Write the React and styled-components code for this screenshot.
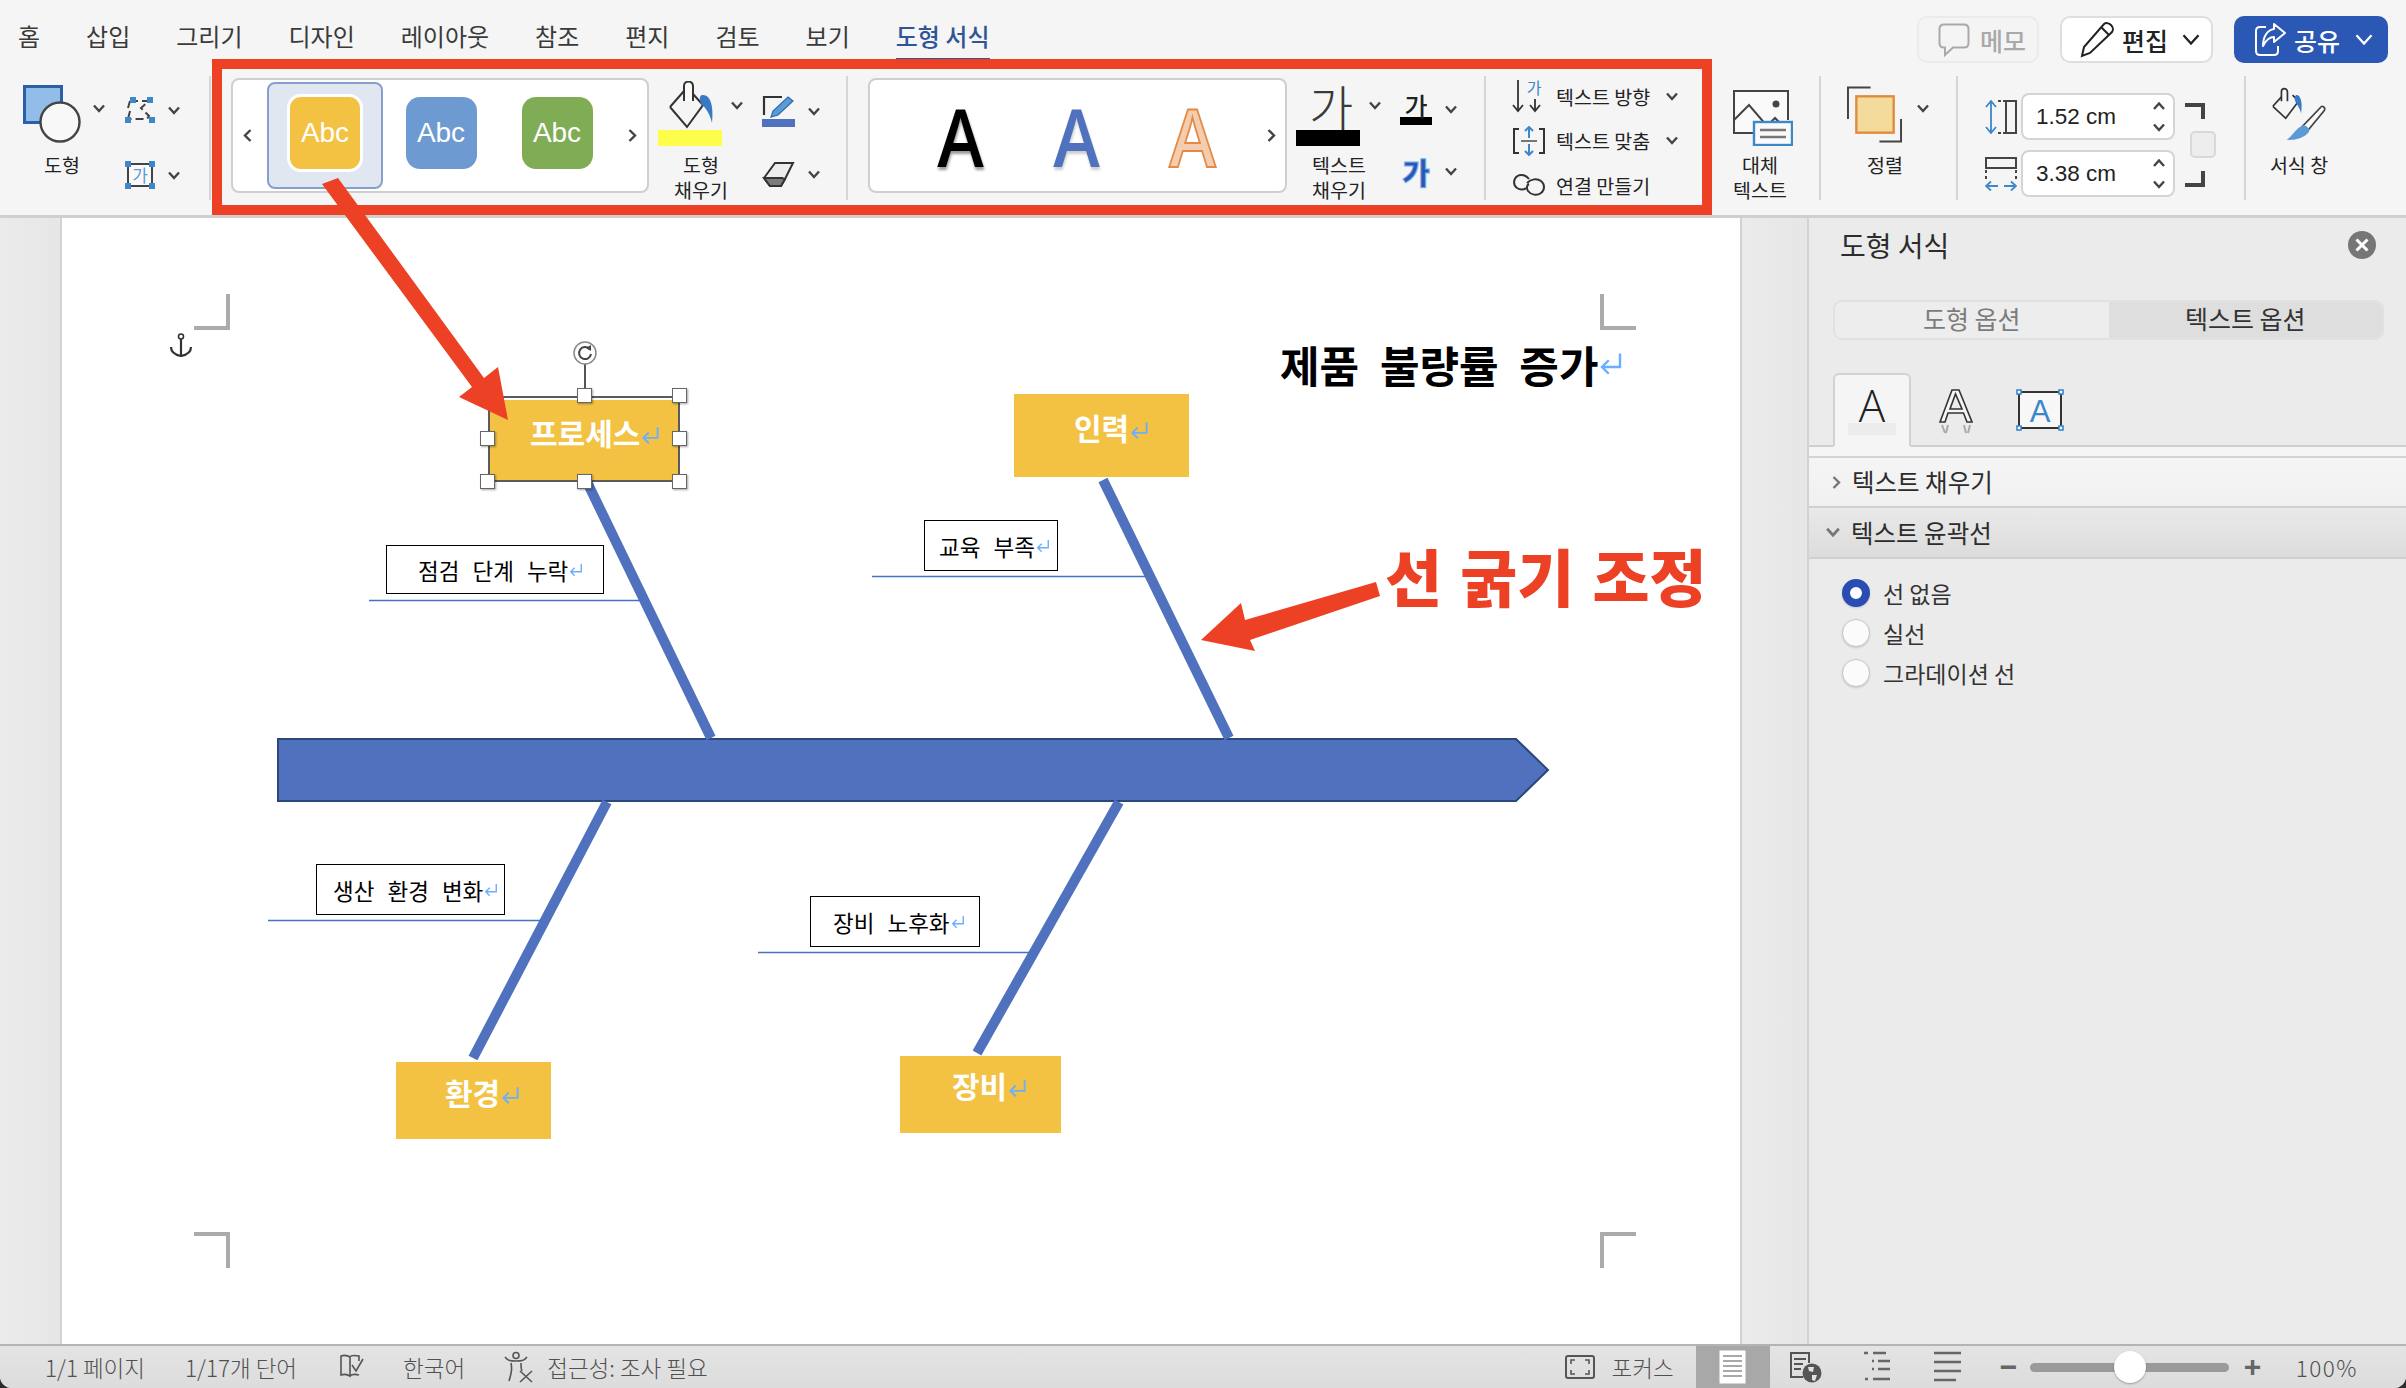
import React from 'react'
import styled, { createGlobalStyle } from 'styled-components'

const KR = `"Noto Sans CJK KR", "Noto Sans", sans-serif`
const ORANGE = '#ec4125'
const YELLOW = '#f4c242'
const BLUE = '#4f71be'
const LINE = '#4472c4'
const INK = '#3a3a3a'

const GlobalStyle = createGlobalStyle`
  html, body { margin: 0; padding: 0; background: #2d2d2d; }
  * { box-sizing: border-box; }
  #root { width: 2406px; height: 1388px; }
`

const TABS = ['홈', '삽입', '그리기', '디자인', '레이아웃', '참조', '편지', '검토', '보기']

/* small icons */
const Chev = ({ dir = 'down', size = 12, color = '#444', weight = 2.4 }) => {
  const d = {
    down: 'M1 1.5 L6 7 L11 1.5',
    up: 'M1 7 L6 1.5 L11 7',
    left: 'M7.5 1 L2 6.5 L7.5 12',
    right: 'M2.5 1 L8 6.5 L2.5 12',
  }[dir]
  const vertical = dir === 'left' || dir === 'right'
  return (
    <svg width={vertical ? 10 : size} height={vertical ? 13 : size * 0.75} viewBox={vertical ? '0 0 10 13' : '0 0 12 9'} style={{ flex: 'none' }}>
      <path d={d} fill="none" stroke={color} strokeWidth={weight} />
    </svg>
  )
}

const ReturnMark = ({ size = 16 }) => (
  <svg width={size} height={size} viewBox="0 0 16 16" style={{ flex: 'none', marginLeft: 1 }}>
    <path d="M14 1 V10 H2 M6.5 5.5 L2 10 L6.5 14.5" fill="none" stroke="#6aaeff" strokeWidth="1.6" />
  </svg>
)

const ShapesIcon = () => (
  <svg width="60" height="58" viewBox="0 0 60 58">
    <rect x="1.5" y="1.5" width="37" height="36" fill="#92bde8" stroke="#2b5fa8" strokeWidth="3" />
    <ellipse cx="37" cy="37" rx="19.5" ry="19.5" fill="#f8f8f8" stroke="#444" strokeWidth="2.4" />
  </svg>
)

const EditShapeIcon = () => (
  <svg width="30" height="26" viewBox="0 0 30 26">
    <path d="M5 4 H24 L16 11 L24 19 L22 22 H5 M5 4 L3 11 M5 14 L3 22" fill="none" stroke="#444" strokeWidth="2" strokeDasharray="8 4" />
    <g fill="#3d87cb">
      <rect x="5" y="0" width="6" height="6" />
      <rect x="22" y="0" width="6" height="6" />
      <rect x="0" y="20" width="6" height="6" />
      <rect x="24" y="20" width="6" height="6" />
    </g>
  </svg>
)

const TextBoxIcon = () => (
  <svg width="30" height="28" viewBox="0 0 30 28">
    <rect x="3" y="3" width="24" height="22" fill="#fafafa" stroke="#444" strokeWidth="2" />
    <g fill="#3d87cb">
      <rect x="0" y="0" width="6" height="6" />
      <rect x="24" y="0" width="6" height="6" />
      <rect x="0" y="22" width="6" height="6" />
      <rect x="24" y="22" width="6" height="6" />
    </g>
    <text x="15" y="21" textAnchor="middle" fontSize="17" fill="#5b9bd5" fontFamily={KR}>가</text>
  </svg>
)

const BucketIcon = () => (
  <svg width="46" height="48" viewBox="0 0 46 48" style={{ flex: 'none' }}>
    <path d="M2 26 L16 10 M2 26 L19 46 L35 24 L25 13" fill="none" stroke="#333" strokeWidth="2" />
    <path d="M16 20 V5 a4.5 4.5 0 0 1 9 0 V20" fill="#fafafa" stroke="#333" strokeWidth="2" />
    <path d="M34 14 C42 13 46 24 44 42 C42 33 38 27 34 24 C31 20 31 15 34 14 Z" fill="#3a79c4" />
  </svg>
)

const PenIcon = () => (
  <svg width="33" height="32" viewBox="0 0 33 32">
    <path d="M20 2 H2 V20" fill="none" stroke="#333" strokeWidth="2.2" />
    <path d="M26 2 L31 6 L16 20 L9 22 L11 16 Z" fill="#5b9bd5" stroke="#2b6cb0" strokeWidth="1.2" />
    <rect x="0" y="24" width="33" height="8" fill={BLUE} />
  </svg>
)

const EraserIcon = () => (
  <svg width="33" height="27" viewBox="0 0 33 27">
    <path d="M2 17 L13 2 H31 L23 18 L19 25 H8 Z" fill="#ededed" stroke="#333" strokeWidth="2" />
    <path d="M2 17 H20 L23 18 L19 25 H8 Z" fill="#7c7c7c" stroke="#333" strokeWidth="2" />
  </svg>
)

const DirectionIcon = () => (
  <svg width="34" height="34" viewBox="0 0 34 34">
    <path d="M6 1 V32 M1 26 L6 32 L11 26 M23 20 V32 M18 26 L23 32 L28 26" fill="none" stroke="#333" strokeWidth="1.8" />
    <text x="22" y="15" textAnchor="middle" fontSize="16" fill="#3d87cb" fontFamily={KR}>가</text>
  </svg>
)

const FitIcon = () => (
  <svg width="34" height="30" viewBox="0 0 34 30">
    <path d="M7 3 H2 V27 H7 M27 3 H32 V27 H27" fill="none" stroke="#333" strokeWidth="2" />
    <path d="M9 15 H25" stroke="#777" strokeWidth="2" />
    <path d="M17 1 V12 M13 5 L17 1 L21 5 M17 18 V29 M13 25 L17 29 L21 25" fill="none" stroke="#3d87cb" strokeWidth="2" />
  </svg>
)

const LinkIcon = () => (
  <svg width="34" height="26" viewBox="0 0 34 26">
    <path d="M17 7 C14 3 9 2 5.5 4 C1 7 1 13 5 16 C8 18 12 18 14 16" fill="none" stroke="#333" strokeWidth="2" />
    <path d="M15 11 C19 7 25 6 29 9 C33 12 33 18 29 21 C25 24 19 23 16 19 C14 16 15 13 17 12" fill="none" stroke="#333" strokeWidth="2" />
  </svg>
)

const AltTextIcon = () => (
  <svg width="60" height="56" viewBox="0 0 60 56">
    <path d="M20 43 H1 V1 H55 V30" fill="#fafafa" stroke="#444" strokeWidth="2" />
    <path d="M1 30 L16 15 L34 36 L42 28 L50 36" fill="none" stroke="#444" strokeWidth="2" />
    <circle cx="43" cy="14" r="3.5" fill="#444" />
    <rect x="21" y="32" width="38" height="23" fill="#fafafa" stroke="#3d87cb" strokeWidth="2.4" />
    <path d="M27 40 H53 M27 47 H53" stroke="#777" strokeWidth="2.4" />
  </svg>
)

const ArrangeIcon = () => (
  <svg width="57" height="57" viewBox="0 0 57 57">
    <path d="M1 33 V1 H24" fill="none" stroke="#444" strokeWidth="2" />
    <path d="M55 33 V56 H33" fill="none" stroke="#444" strokeWidth="2" />
    <rect x="9.5" y="10" width="38" height="37" fill="#f3dc9b" stroke="#e08b3c" strokeWidth="2.4" />
  </svg>
)

const HeightIcon = () => (
  <svg width="32" height="34" viewBox="0 0 32 34">
    <path d="M6 1 V33 M1 7 L6 1 L11 7 M1 27 L6 33 L11 27" fill="none" stroke="#3d87cb" strokeWidth="1.8" />
    <rect x="21" y="1" width="10" height="32" fill="none" stroke="#444" strokeWidth="2" />
    <path d="M13 1 H20 M13 33 H20" stroke="#444" strokeWidth="2" strokeDasharray="3 2" />
  </svg>
)

const WidthIcon = () => (
  <svg width="32" height="34" viewBox="0 0 32 34">
    <rect x="1" y="1" width="30" height="10" fill="none" stroke="#444" strokeWidth="2" />
    <path d="M1 13 V23 M31 13 V23" stroke="#444" strokeWidth="2" strokeDasharray="3 3" />
    <path d="M1 29 H13 M19 29 H31 M6 24.5 L1 29 L6 33.5 M26 24.5 L31 29 L26 33.5" fill="none" stroke="#3d87cb" strokeWidth="1.8" />
  </svg>
)

const PaneIcon = () => (
  <svg width="63" height="62" viewBox="0 0 63 62">
    <path d="M1 22 L11 11 M1 22 L16 36 L31 16 L24 9" fill="none" stroke="#333" strokeWidth="2" />
    <path d="M11 16 V5 a3.5 3.5 0 0 1 7 0 V16" fill="#fafafa" stroke="#333" strokeWidth="2" />
    <path d="M28 9 C33 8 36 17 34 30 C32 24 30 21 28 18 C26 14 26 10 28 9 Z" fill="#3a79c4" />
    <path d="M56 24 C58 20 63 23 61 27 L42 50 L36 45 Z" fill="#fafafa" stroke="#444" strokeWidth="2" />
    <path d="M36 44 C40 44 45 48 43 52 C38 59 26 62 17 61 C24 57 27 48 36 44 Z" fill="#5b9bd5" />
  </svg>
)

const CommentIcon = () => (
  <svg width="32" height="34" viewBox="0 0 32 34">
    <path d="M6 1.5 H26 C29 1.5 30.5 3 30.5 6 V20 C30.5 23 29 24.5 26 24.5 H15 L7 32 V24.5 H6 C3 24.5 1.5 23 1.5 20 V6 C1.5 3 3 1.5 6 1.5 Z" fill="none" stroke="#a9a9a9" strokeWidth="2" />
  </svg>
)

const PencilIcon = () => (
  <svg width="34" height="36" viewBox="0 0 34 36">
    <path d="M24 2 C26 0.5 29 1 31 3 C33 5 33.5 8 32 10 L10 31 L2 34 L4 25 Z M21 5 L29 13" fill="#fff" stroke="#222" strokeWidth="2" />
  </svg>
)

const ShareIcon = () => (
  <svg width="32" height="36" viewBox="0 0 32 36">
    <path d="M12 5 H6 C3 5 2 6 2 9 V29 C2 32 3 33 6 33 H20 C23 33 24 32 24 29 V24" fill="none" stroke="#fff" strokeWidth="2" />
    <path d="M20 2 L31 11 L20 20 V15 C15 15 12 18 9 24 C9 15 13 8 20 7 Z" fill="none" stroke="#fff" strokeWidth="2" strokeLinejoin="round" />
  </svg>
)

const CloseIcon = () => (
  <svg width="28" height="28" viewBox="0 0 28 28">
    <circle cx="14" cy="14" r="14" fill="#767676" />
    <path d="M8.5 8.5 L19.5 19.5 M19.5 8.5 L8.5 19.5" stroke="#fff" strokeWidth="3" />
  </svg>
)

const OutlineAIcon = () => (
  <svg width="34" height="46" viewBox="0 0 34 46">
    <path d="M1 33 L13 1 H20 L33 33 H28 L24.5 24 H9 L6 33 Z M11 20 H23 L16.5 5 Z" fill="#f5f5f5" stroke="#333" strokeWidth="1.6" />
    <path d="M3 36 L6 44 M9 36 L7 44 M25 36 L27 44 M31 36 L29 44" stroke="#aaa" strokeWidth="2" />
  </svg>
)

const BoxAIcon = () => (
  <svg width="48" height="42" viewBox="0 0 48 42">
    <rect x="3" y="3" width="42" height="36" fill="#f7f7f7" stroke="#333" strokeWidth="2" />
    <text x="24" y="33" textAnchor="middle" fontSize="31" fill="#3d87cb" fontFamily="Liberation Sans">A</text>
    <g fill="#fff" stroke="#3d87cb" strokeWidth="1.6">
      <rect x="1" y="1" width="4" height="4" />
      <rect x="43" y="1" width="4" height="4" />
      <rect x="1" y="37" width="4" height="4" />
      <rect x="43" y="37" width="4" height="4" />
    </g>
  </svg>
)

const BookIcon = () => (
  <svg width="24" height="28" viewBox="0 0 24 28">
    <path d="M10 4 C7 2 4 2 1 3 V22 C4 21 7 21 10 23 V4 M10 4 C11 2 14 2 19 3 V8 M10 23 C12 21 15 21 19 22" fill="none" stroke="#555" strokeWidth="1.6" />
    <path d="M12 12 L16 18 L23 6" fill="none" stroke="#555" strokeWidth="1.6" />
  </svg>
)

const PersonIcon = () => (
  <svg width="32" height="32" viewBox="0 0 32 32">
    <circle cx="13" cy="4.5" r="3" fill="none" stroke="#555" strokeWidth="1.6" />
    <path d="M2 6 C5 10 8 10 13 10 C18 10 21 10 24 6 M8 12 C9 17 9 20 6 30 M18 12 C18 16 18 18 19 20" fill="none" stroke="#555" strokeWidth="1.6" />
    <path d="M17 20 L29 31 M29 20 L17 31" stroke="#555" strokeWidth="1.6" />
  </svg>
)

const FocusIcon = () => (
  <svg width="30" height="24" viewBox="0 0 30 24">
    <rect x="1" y="1" width="28" height="22" rx="2" fill="none" stroke="#555" strokeWidth="2" />
    <path d="M6 9 V5 H10 M20 5 H24 V9 M24 15 V19 H20 M10 19 H6 V15" fill="none" stroke="#555" strokeWidth="1.6" />
  </svg>
)

const PrintViewIcon = () => (
  <svg width="27" height="34" viewBox="0 0 27 34">
    <rect x="1" y="1" width="25" height="32" fill="#fff" stroke="#fff" />
    <path d="M4 6 H23 M4 11 H23 M4 16 H23 M4 21 H23 M4 26 H23" stroke="#a8a8a8" strokeWidth="2" />
  </svg>
)

const WebViewIcon = () => (
  <svg width="33" height="32" viewBox="0 0 33 32">
    <path d="M14 26 H2 V2 H20 V12" fill="none" stroke="#555" strokeWidth="2" />
    <path d="M5 8 H17 M5 13 H14 M5 18 H12" stroke="#555" strokeWidth="2" />
    <circle cx="23" cy="22" r="9.5" fill="#555" />
    <path d="M19 16 L25 16 L24 21 L20 20 Z M23 24 L28 24 L26 30 L23 29 Z" fill="#e2e2e2" />
  </svg>
)

const OutlineViewIcon = () => (
  <svg width="30" height="32" viewBox="0 0 30 32">
    <path d="M2 2 H6 M11 2 H24 M10 10 H12 M16 10 H28 M10 18 H12 M16 18 H28 M3 28 H6 M11 28 H28" stroke="#666" strokeWidth="2.4" />
  </svg>
)

const DraftViewIcon = () => (
  <svg width="29" height="32" viewBox="0 0 29 32">
    <path d="M1 2 H28 M1 11 H28 M1 20 H28 M1 29 H23" stroke="#666" strokeWidth="2.6" />
  </svg>
)

const RedOverlayIcon = () => (
  <svg width="2406" height="1388" viewBox="0 0 2406 1388">
    <rect x="217" y="64" width="1490" height="146" fill="none" stroke={ORANGE} strokeWidth="10" />
    <path d="M322 184 L338 178 L484 378 L498 367 L508 420 L459 397 L472 387 Z" fill={ORANGE} />
    <path d="M1376 582 L1380 596 L1250 640 L1255 651 L1201 640 L1241 603 L1245 620 Z" fill={ORANGE} />
  </svg>
)

const BonesDrawing = () => (
  <svg width="1679" height="1126" viewBox="62 218 1679 1126">
    <path d="M278 739 H1516 L1548 770 L1516 801 H278 Z" fill={BLUE} stroke="#2c4779" strokeWidth="2" />
    <g stroke={BLUE} strokeWidth="10" fill="none">
      <path d="M587 482 L711 738" />
      <path d="M1103 480 L1229 738" />
      <path d="M607 802 L473 1058" />
      <path d="M1119 802 L977 1053" />
    </g>
    <g stroke={LINE} strokeWidth="1.5">
      <path d="M369 600.5 H642" />
      <path d="M872 576.5 H1146" />
      <path d="M268 920.5 H541" />
      <path d="M758 952.5 H1032" />
    </g>
  </svg>
)

const AnchorIcon = () => (
  <svg width="24" height="24" viewBox="0 0 24 24">
    <circle cx="12" cy="3.5" r="2.5" fill="none" stroke="#333" strokeWidth="1.6" />
    <path d="M12 6 V23 M2 14 C2 20 7 22 12 23 C17 22 22 20 22 14" fill="none" stroke="#333" strokeWidth="2.2" />
  </svg>
)

const RotateIcon = () => (
  <svg width="24" height="24" viewBox="0 0 24 24">
    <circle cx="12" cy="12" r="11" fill="#fff" stroke="#888" strokeWidth="1.5" />
    <path d="M16.5 8 A6 6 0 1 0 18 13" fill="none" stroke="#444" strokeWidth="2" />
    <path d="M13 7 L18 4 L18 10 Z" fill="#444" />
  </svg>
)

const HANDLES = [
  [488, 396], [585, 396], [680, 396],
  [488, 439], [680, 439],
  [488, 482], [585, 482], [680, 482],
]

const BOXES = [
  { text: '프로세스', x: 488, y: 396, w: 192, h: 86, tx: 40, ty: 13 },
  { text: '인력', x: 1014, y: 394, w: 175, h: 83, tx: 60, ty: 12 },
  { text: '환경', x: 396, y: 1062, w: 155, h: 77, tx: 49, ty: 9 },
  { text: '장비', x: 900, y: 1056, w: 161, h: 77, tx: 52, ty: 8 },
]

const LABELS = [
  { text: '점검 단계 누락', x: 386, y: 545, w: 218, h: 49, tx: 31 },
  { text: '교육 부족', x: 924, y: 520, w: 134, h: 51, tx: 14 },
  { text: '생산 환경 변화', x: 316, y: 864, w: 189, h: 51, tx: 16 },
  { text: '장비 노후화', x: 810, y: 896, w: 170, h: 51, tx: 22 },
]

export default function App() {
  return (
    <Window>
      <GlobalStyle />
      <TabBar>
        {TABS.map(tab => (
          <Tab key={tab}>{tab}</Tab>
        ))}
        <Tab $active>도형 서식</Tab>
        <TopActions>
          <MemoButton>
            <CommentIcon />
            메모
          </MemoButton>
          <EditButton>
            <PencilIcon />
            편집
            <Chev color="#222" size={18} weight={1.5} />
          </EditButton>
          <ShareButton>
            <ShareIcon />
            공유
            <Chev color="#fff" size={18} weight={1.5} />
          </ShareButton>
        </TopActions>
      </TabBar>

      <Ribbon>
        <Group $w={211} $pl={23}>
          <ToolColumn $w={82}>
            <IconZone>
              <ShapesIcon />
              <ChevSlot $x={10} $y={-12}>
                <Chev />
              </ChevSlot>
            </IconZone>
            <ToolLabel $w={78}>도형</ToolLabel>
          </ToolColumn>
          <SmallStack $ml={20} $top={21} $gap={38}>
            <SmallRow>
              <EditShapeIcon />
              <Chev />
            </SmallRow>
            <SmallRow>
              <TextBoxIcon />
              <Chev />
            </SmallRow>
          </SmallStack>
        </Group>

        <Group $w={637} $pl={20}>
          <Gallery $w={418}>
            <Chev dir="left" />
            <StyleCells $ml={14} $mr={12}>
              <StyleCell $active>
                <Swatch $color={YELLOW} $ring>Abc</Swatch>
              </StyleCell>
              <StyleCell>
                <Swatch $color="#6d9bd1">Abc</Swatch>
              </StyleCell>
              <StyleCell>
                <Swatch $color="#81ac56">Abc</Swatch>
              </StyleCell>
            </StyleCells>
            <Chev dir="right" />
          </Gallery>
          <ColorTool>
            <ColorIconRow>
              <BucketIcon />
              <Chev />
            </ColorIconRow>
            <ColorBar $color="#fdfd4c" />
            <ToolLabel>
              도형
              <br />
              채우기
            </ToolLabel>
          </ColorTool>
          <SmallStack $ml={18} $top={19} $gap={34}>
            <SmallRow>
              <PenIcon />
              <Chev />
            </SmallRow>
            <SmallRow>
              <EraserIcon />
              <Chev />
            </SmallRow>
          </SmallStack>
        </Group>

        <Group $w={638} $pl={20}>
          <Gallery $w={419}>
            <StyleCells $ml={22} $mr={16}>
              <WordCell>
                <WordA $color="#000" $shadow="rgba(0,0,0,.4)">A</WordA>
              </WordCell>
              <WordCell>
                <WordA $color={BLUE} $shadow="rgba(0,0,0,.2)">A</WordA>
              </WordCell>
              <WordCell>
                <WordA $color="#f4cdb0" $stroke="#e58a45">A</WordA>
              </WordCell>
            </StyleCells>
            <Chev dir="right" />
          </Gallery>
          <ColorTool>
            <ColorIconRow>
              <BigGa>가</BigGa>
              <Chev />
            </ColorIconRow>
            <ColorBar $color="#000" />
            <ToolLabel>
              텍스트
              <br />
              채우기
            </ToolLabel>
          </ColorTool>
          <SmallStack $ml={18} $top={17} $gap={30}>
            <SmallRow>
              <UnderGa>가</UnderGa>
              <Chev />
            </SmallRow>
            <SmallRow>
              <GlowGa>가</GlowGa>
              <Chev />
            </SmallRow>
          </SmallStack>
        </Group>

        <Group $w={335} $pl={26}>
          <TextTools>
            <TextToolRow>
              <DirectionIcon />
              <TextToolLabel>텍스트 방향</TextToolLabel>
              <Chev />
            </TextToolRow>
            <TextToolRow>
              <FitIcon />
              <TextToolLabel>텍스트 맞춤</TextToolLabel>
              <Chev />
            </TextToolRow>
            <TextToolRow>
              <LinkIcon />
              <TextToolLabel>연결 만들기</TextToolLabel>
            </TextToolRow>
          </TextTools>
          <ToolColumn $w={70} $ml={47}>
            <IconZone $center>
              <AltTextIcon />
            </IconZone>
            <ToolLabel>
              대체
              <br />
              텍스트
            </ToolLabel>
          </ToolColumn>
        </Group>

        <Group $w={137} $pl={26}>
          <ToolColumn $w={82}>
            <IconZone>
              <ArrangeIcon />
              <ChevSlot $x={14} $y={-12}>
                <Chev />
              </ChevSlot>
            </IconZone>
            <ToolLabel $w={76}>정렬</ToolLabel>
          </ToolColumn>
        </Group>

        <Group $w={288} $pl={27}>
          <SizeStack>
            <SizeRow>
              <HeightIcon />
              <SizeInput>
                1.52 cm
                <Stepper>
                  <Chev dir="up" />
                  <Chev />
                </Stepper>
              </SizeInput>
            </SizeRow>
            <SizeRow>
              <WidthIcon />
              <SizeInput>
                3.38 cm
                <Stepper>
                  <Chev dir="up" />
                  <Chev />
                </Stepper>
              </SizeInput>
            </SizeRow>
          </SizeStack>
          <LockColumn>
            <LockCorner />
            <LockBox />
            <LockCorner $bottom />
          </LockColumn>
        </Group>

        <Group $w={160} $pl={26} $last>
          <ToolColumn $w={54}>
            <IconZone>
              <PaneIcon />
            </IconZone>
            <ToolLabel $nowrap>서식 창</ToolLabel>
          </ToolColumn>
        </Group>
      </Ribbon>

      <Main>
        <DocArea>
          <Gutter $w={62} />
          <Page>
            <BonesDrawing />
            <CropMark $x={194} $y={294} $right $bottom />
            <CropMark $x={1600} $y={294} $left $bottom />
            <CropMark $x={194} $y={1232} $right $top />
            <CropMark $x={1600} $y={1232} $left $top />
            <Placed $x={169} $y={333}>
              <AnchorIcon />
            </Placed>

            {BOXES.map(b => (
              <CauseBox key={b.text} $x={b.x} $y={b.y} $w={b.w} $h={b.h} $tx={b.tx} $ty={b.ty} $selected={b.text === '프로세스'}>
                {b.text}
                <ReturnMark size={19} />
              </CauseBox>
            ))}
            <RotateStem />
            <Placed $x={573} $y={341}>
              <RotateIcon />
            </Placed>
            {HANDLES.map(([x, y]) => (
              <Handle key={`${x}-${y}`} $x={x} $y={y} />
            ))}

            {LABELS.map(l => (
              <SubLabel key={l.text} $x={l.x} $y={l.y} $w={l.w} $h={l.h} $tx={l.tx}>
                {l.text}
                <ReturnMark size={14} />
              </SubLabel>
            ))}

            <DiagramTitle>
              제품 불량률 증가
              <ReturnMark size={24} />
            </DiagramTitle>
            <Callout>선 굵기 조정</Callout>
          </Page>
          <Gutter $w={65} />
        </DocArea>

        <Panel>
          <PanelHead>
            <PanelTitle>도형 서식</PanelTitle>
            <CloseIcon />
          </PanelHead>
          <Segmented>
            <Segment>도형 옵션</Segment>
            <Segment $active>텍스트 옵션</Segment>
          </Segmented>
          <IconTabs>
            <IconTab $active>
              <PlainA>A</PlainA>
              <PlainABar />
            </IconTab>
            <IconTab>
              <OutlineAIcon />
            </IconTab>
            <IconTab>
              <BoxAIcon />
            </IconTab>
          </IconTabs>
          <PanelSpacer />
          <Section>
            <Chev dir="right" color="#777" />
            <SectionTitle>텍스트 채우기</SectionTitle>
          </Section>
          <Section $open>
            <Chev color="#777" size={14} />
            <SectionTitle>텍스트 윤곽선</SectionTitle>
          </Section>
          <RadioList>
            <RadioRow>
              <Radio $checked />
              선 없음
            </RadioRow>
            <RadioRow>
              <Radio />
              실선
            </RadioRow>
            <RadioRow>
              <Radio />
              그라데이션 선
            </RadioRow>
          </RadioList>
        </Panel>
      </Main>

      <StatusBar>
        <StatusText $ml={45}>1/1 페이지</StatusText>
        <StatusText $ml={40}>1/17개 단어</StatusText>
        <StatusIcon $ml={43}>
          <BookIcon />
        </StatusIcon>
        <StatusText $ml={39}>한국어</StatusText>
        <StatusIcon $ml={38}>
          <PersonIcon />
        </StatusIcon>
        <StatusText $ml={12}>접근성: 조사 필요</StatusText>
        <StatusRight>
          <FocusIcon />
          <StatusText $ml={17}>포커스</StatusText>
          <ViewButton $active>
            <PrintViewIcon />
          </ViewButton>
          <StatusIcon $ml={19}>
            <WebViewIcon />
          </StatusIcon>
          <StatusIcon $ml={40}>
            <OutlineViewIcon />
          </StatusIcon>
          <StatusIcon $ml={41}>
            <DraftViewIcon />
          </StatusIcon>
          <ZoomSign $ml={38}>−</ZoomSign>
          <ZoomTrack>
            <ZoomThumb />
          </ZoomTrack>
          <ZoomSign $ml={15}>+</ZoomSign>
          <StatusText $ml={36} $wide>100%</StatusText>
        </StatusRight>
      </StatusBar>

      <RedOverlay>
        <RedOverlayIcon />
      </RedOverlay>
    </Window>
  )
}

const Window = styled.div`
  position: relative;
  width: 2406px;
  height: 1388px;
  overflow: hidden;
  background: #f5f5f5;
  border-radius: 0 0 12px 12px;
  font-family: ${KR};
  color: ${INK};
`

const RedOverlay = styled.div`
  position: absolute;
  inset: 0;
  pointer-events: none;
  z-index: 5;
`

const TabBar = styled.div`
  position: relative;
  z-index: 1;
  display: flex;
  align-items: flex-end;
  gap: 46px;
  height: 60px;
  padding: 0 18px;
`

const Tab = styled.div`
  height: 42px;
  line-height: 36px;
  font-size: 24px;
  white-space: nowrap;
  color: ${p => (p.$active ? '#2f5597' : INK)};
  font-weight: ${p => (p.$active ? 500 : 400)};
  border-bottom: 2px solid ${p => (p.$active ? '#2f5597' : 'transparent')};
`

const TopActions = styled.div`
  display: flex;
  gap: 21px;
  margin-left: auto;
  margin-bottom: -3px;
`

const TopButton = styled.div`
  display: flex;
  align-items: center;
  height: 47px;
  border-radius: 10px;
  font-size: 25px;
  font-weight: 500;
  white-space: nowrap;
`

const MemoButton = styled(TopButton)`
  width: 122px;
  padding-left: 19px;
  gap: 10px;
  color: #a9a9a9;
  background: #f4f4f4;
  border: 2px solid #ebebeb;
`

const EditButton = styled(TopButton)`
  width: 153px;
  padding-left: 18px;
  gap: 8px;
  color: #222;
  background: #fff;
  border: 2px solid #dedede;
  & > svg:last-child {
    margin-left: 6px;
  }
`

const ShareButton = styled(TopButton)`
  width: 154px;
  padding-left: 20px;
  gap: 8px;
  color: #fff;
  background: #2b57b5;
  & > svg:last-child {
    margin-left: 7px;
  }
`

const Ribbon = styled.div`
  display: flex;
  height: 158px;
  padding: 16px 0 16px;
  border-bottom: 3px solid #cfcfcf;
`

const Group = styled.div`
  display: flex;
  align-items: flex-start;
  flex: 0 0 ${p => p.$w}px;
  height: 124px;
  padding-left: ${p => p.$pl}px;
  border-right: ${p => (p.$last ? 'none' : '2px solid #d6d6d6')};
`

const ToolColumn = styled.div`
  display: flex;
  flex-direction: column;
  flex: none;
  width: ${p => p.$w || 70}px;
  margin-left: ${p => p.$ml || 0}px;
`

const IconZone = styled.div`
  display: flex;
  align-items: center;
  justify-content: ${p => (p.$center ? 'center' : 'flex-start')};
  height: 76px;
  padding: ${p => (p.$center ? '8px 0 0 6px' : '0')};
`

const ChevSlot = styled.span`
  display: flex;
  margin-left: ${p => p.$x}px;
  margin-top: ${p => p.$y}px;
`

const ToolLabel = styled.div`
  display: flex;
  justify-content: center;
  width: ${p => (p.$w ? `${p.$w}px` : '100%')};
  font-size: 19.5px;
  line-height: 25px;
  text-align: center;
  white-space: ${p => (p.$nowrap ? 'nowrap' : 'normal')};
  color: #222;
`

const SmallStack = styled.div`
  display: flex;
  flex-direction: column;
  gap: ${p => p.$gap}px;
  margin-left: ${p => p.$ml}px;
  padding-top: ${p => p.$top}px;
`

const SmallRow = styled.div`
  display: flex;
  align-items: center;
  gap: 13px;
`

const Gallery = styled.div`
  display: flex;
  align-items: center;
  flex: none;
  width: ${p => p.$w}px;
  height: 115px;
  margin-top: 2px;
  padding-left: 10px;
  background: #fff;
  border: 2px solid #cfcfcf;
  border-radius: 8px;
`

const StyleCells = styled.div`
  display: flex;
  margin-left: ${p => p.$ml}px;
  margin-right: ${p => p.$mr}px;
`

const StyleCell = styled.div`
  display: flex;
  align-items: center;
  justify-content: center;
  width: 116px;
  height: 107px;
  border-radius: 8px;
  background: ${p => (p.$active ? '#e1e7f1' : 'transparent')};
  border: 2px solid ${p => (p.$active ? '#86a0cc' : 'transparent')};
`

const Swatch = styled.div`
  display: flex;
  align-items: center;
  justify-content: center;
  width: ${p => (p.$ring ? 76 : 71)}px;
  height: ${p => (p.$ring ? 78 : 72)}px;
  margin-top: -5px;
  border-radius: 14px;
  border: ${p => (p.$ring ? '3px solid #fff' : 'none')};
  background: ${p => p.$color};
  color: #fff;
  font-family: 'Liberation Sans', sans-serif;
  font-size: 28px;
`

const WordCell = styled.div`
  display: flex;
  justify-content: center;
  width: 116px;
`

const WordA = styled.div`
  font-family: 'Open Sans', sans-serif;
  font-size: 80px;
  font-weight: 600;
  line-height: 107px;
  transform: scaleX(0.88);
  color: ${p => p.$color};
  -webkit-text-stroke: ${p => (p.$stroke ? `2px ${p.$stroke}` : '0')};
  text-shadow: ${p => (p.$shadow ? `1px 3px 3px ${p.$shadow}` : 'none')};
`

const ColorTool = styled.div`
  display: flex;
  flex-direction: column;
  flex: none;
  width: 86px;
  margin-left: 9px;
`

const ColorIconRow = styled.div`
  display: flex;
  align-items: center;
  gap: 17px;
  height: 54px;
  padding-left: 10px;
  padding-top: 4px;
`

const ColorBar = styled.div`
  width: 64px;
  height: 16px;
  margin-bottom: 6px;
  background: ${p => p.$color};
`

const BigGa = styled.span`
  flex: none;
  width: 46px;
  font-size: 48px;
  font-weight: 300;
  line-height: 50px;
  margin-left: 3px;
  margin-right: -3px;
`

const UnderGa = styled.span`
  width: 32px;
  height: 32px;
  font-size: 25px;
  font-weight: 500;
  line-height: 24px;
  text-align: center;
  border-bottom: 8px solid #000;
  color: #222;
`

const GlowGa = styled.span`
  width: 32px;
  font-size: 30px;
  font-weight: 900;
  line-height: 32px;
  text-align: center;
  color: #2b57b5;
  -webkit-text-stroke: 1px #7db2e8;
`

const TextTools = styled.div`
  display: flex;
  flex-direction: column;
  flex: none;
  width: 166px;
  margin-top: -2px;
`

const TextToolRow = styled.div`
  display: flex;
  align-items: center;
  height: 44.5px;
`

const TextToolLabel = styled.span`
  flex: 1;
  margin-left: 10px;
  font-size: 19.5px;
  white-space: nowrap;
  color: #222;
`

const SizeStack = styled.div`
  display: flex;
  flex-direction: column;
  gap: 10px;
  padding-top: 17px;
`

const SizeRow = styled.div`
  display: flex;
  align-items: center;
  gap: 4px;
`

const SizeInput = styled.div`
  display: flex;
  align-items: center;
  justify-content: space-between;
  width: 154px;
  height: 47px;
  padding: 0 8px 0 13px;
  background: #fff;
  border: 2px solid #d4d4d4;
  border-radius: 8px;
  font-family: 'Liberation Sans', sans-serif;
  font-size: 22.5px;
  color: #222;
`

const Stepper = styled.div`
  display: flex;
  flex-direction: column;
  gap: 12px;
`

const LockColumn = styled.div`
  display: flex;
  flex-direction: column;
  align-items: flex-start;
  margin-left: 10px;
  padding-top: 27px;
`

const LockCorner = styled.div`
  width: 20px;
  height: 16px;
  border-right: 4px solid #444;
  border-top: ${p => (p.$bottom ? 'none' : '4px solid #444')};
  border-bottom: ${p => (p.$bottom ? '4px solid #444' : 'none')};
`

const LockBox = styled.div`
  width: 26px;
  height: 27px;
  margin: 12px 0 13px 5px;
  background: #ededed;
  border: 2px solid #d8d8d8;
  border-radius: 5px;
`

const Main = styled.div`
  display: flex;
  height: 1126px;
`

const DocArea = styled.div`
  display: flex;
  flex: 0 0 1807px;
`

const Gutter = styled.div`
  flex: 0 0 ${p => p.$w}px;
  background: linear-gradient(to right, #ebebeb, #e6e6e6);
`

const Page = styled.div`
  position: relative;
  flex: 0 0 1682px;
  height: 1126px;
  overflow: hidden;
  margin-left: -2px;
  background: #fff;
  border-left: 2px solid #d2d2d2;
  border-right: 2px solid #d2d2d2;
  & > svg:first-child {
    position: absolute;
    left: 0;
    top: 0;
  }
`

/* page children are placed by their screenshot coordinates: the diagram is a free canvas */
const Placed = styled.div`
  position: absolute;
  display: flex;
  left: ${p => p.$x - 62}px;
  top: ${p => p.$y - 218}px;
`

const CropMark = styled(Placed)`
  width: 36px;
  height: 36px;
  ${p => (p.$right ? 'border-right: 4px solid #ababab;' : '')}
  ${p => (p.$left ? 'border-left: 4px solid #ababab;' : '')}
  ${p => (p.$bottom ? 'border-bottom: 4px solid #ababab;' : '')}
  ${p => (p.$top ? 'border-top: 4px solid #ababab;' : '')}
`

const CauseBox = styled(Placed)`
  align-items: flex-start;
  width: ${p => p.$w}px;
  height: ${p => p.$h}px;
  padding: ${p => p.$ty}px 0 0 ${p => p.$tx}px;
  background: ${YELLOW};
  border: ${p => (p.$selected ? '2px solid #5b5b5b' : 'none')};
  box-shadow: ${p => (p.$selected ? 'inset 0 2px 0 #fff' : 'none')};
  color: #fff;
  font-size: 30px;
  font-weight: 700;
  line-height: 42px;
  white-space: nowrap;
  & > svg {
    margin-top: 15px;
  }
`

const RotateStem = styled(Placed).attrs({ $x: 584, $y: 364 })`
  width: 2px;
  height: 30px;
  background: #555;
`

const Handle = styled.div`
  position: absolute;
  left: ${p => p.$x - 62 - 8}px;
  top: ${p => p.$y - 218 - 8}px;
  width: 15px;
  height: 15px;
  background: #fff;
  border: 1px solid #666;
  box-shadow: 1px 1px 2px rgba(0, 0, 0, 0.35);
`

const SubLabel = styled(Placed)`
  align-items: center;
  width: ${p => p.$w}px;
  height: ${p => p.$h}px;
  padding-left: ${p => p.$tx}px;
  background: #fff;
  border: 1.5px solid #000;
  color: #000;
  font-size: 22.5px;
  word-spacing: 8px;
  white-space: nowrap;
`

const DiagramTitle = styled(Placed).attrs({ $x: 1280, $y: 338 })`
  align-items: center;
  font-size: 43px;
  font-weight: 700;
  line-height: 52px;
  word-spacing: 11px;
  white-space: nowrap;
  color: #000;
`

const Callout = styled(Placed).attrs({ $x: 1385, $y: 533 })`
  font-size: 62px;
  font-weight: 900;
  line-height: 84px;
  word-spacing: 4px;
  white-space: nowrap;
  color: ${ORANGE};
`

const Panel = styled.div`
  flex: 1;
  background: #ebebeb;
  border-left: 2px solid #d2d2d2;
`

const PanelHead = styled.div`
  display: flex;
  align-items: center;
  justify-content: space-between;
  height: 53px;
  padding: 0 30px 0 31px;
`

const PanelTitle = styled.div`
  font-size: 28px;
  color: #2c2c2c;
`

const Segmented = styled.div`
  display: flex;
  width: 551px;
  height: 40px;
  margin: 29px 0 33px 24px;
  border: 2px solid #e1e1e1;
  border-radius: 9px;
  overflow: hidden;
`

const Segment = styled.div`
  flex: 1;
  text-align: center;
  font-size: 25px;
  line-height: 33px;
  color: ${p => (p.$active ? '#333' : '#7c7c7c')};
  background: ${p => (p.$active ? '#dedede' : '#ededed')};
`

const IconTabs = styled.div`
  display: flex;
  align-items: flex-start;
  height: 74px;
  padding-left: 24px;
  border-bottom: 2px solid #cfcfcf;
`

const IconTab = styled.div`
  position: relative;
  display: flex;
  align-items: flex-start;
  justify-content: center;
  width: ${p => (p.$active ? 78 : 90)}px;
  height: 74px;
  padding-top: ${p => (p.$active ? 8 : 16)}px;
  background: ${p => (p.$active ? '#f5f5f5' : 'transparent')};
  border: ${p => (p.$active ? '2px solid #d2d2d2' : 'none')};
  border-bottom: ${p => (p.$active ? '2px solid #f5f5f5' : 'none')};
  border-radius: 6px 6px 0 0;
  &:nth-child(3) {
    margin-left: -6px;
  }
`

const PlainA = styled.div`
  font-family: 'Open Sans', sans-serif;
  font-size: 44px;
  font-weight: 300;
  line-height: 44px;
  color: #222;
`

const PlainABar = styled.div`
  position: absolute;
  left: 13px;
  bottom: 10px;
  width: 48px;
  height: 12px;
  background: #ececec;
`

const PanelSpacer = styled.div`
  height: 11px;
  background: #f5f5f5;
  border-bottom: 2px solid #d4d4d4;
`

const Section = styled.div`
  display: flex;
  align-items: center;
  gap: 11px;
  height: ${p => (p.$open ? 51 : 50)}px;
  padding-left: ${p => (p.$open ? 17 : 22)}px;
  background: ${p => (p.$open ? 'linear-gradient(#e9e9e9, #dcdcdc)' : 'linear-gradient(#f5f5f5, #f0f0f0)')};
  border-bottom: 2px solid #d0d0d0;
`

const SectionTitle = styled.div`
  font-size: 24.5px;
  line-height: 42px;
  color: #2c2c2c;
`

const RadioList = styled.div`
  display: flex;
  flex-direction: column;
  padding: 14px 0 0 33px;
`

const RadioRow = styled.div`
  display: flex;
  align-items: center;
  gap: 13px;
  height: 40px;
  font-size: 23px;
  color: #333;
`

const Radio = styled.div`
  width: 28px;
  height: 28px;
  border-radius: 50%;
  background: ${p => (p.$checked ? '#fff' : '#fbfbfb')};
  border: ${p => (p.$checked ? '8px solid #2a4db4' : '1px solid #c6c6c6')};
  box-shadow: 0 1px 2px rgba(0, 0, 0, 0.15);
`

const StatusBar = styled.div`
  display: flex;
  align-items: center;
  height: 44px;
  background: linear-gradient(#e4e4e4, #dcdcdc);
  border-top: 2px solid #b4b4b4;
  color: #505050;
`

const StatusText = styled.span`
  margin-left: ${p => p.$ml}px;
  font-size: 22.5px;
  font-weight: 300;
  letter-spacing: ${p => (p.$wide ? '1.5px' : '0')};
  white-space: nowrap;
`

const StatusIcon = styled.span`
  display: flex;
  margin-left: ${p => p.$ml}px;
`

const StatusRight = styled.div`
  display: flex;
  align-items: center;
  height: 100%;
  margin-left: auto;
  padding-right: 48px;
`

const ViewButton = styled.div`
  display: flex;
  align-items: center;
  justify-content: center;
  width: 74px;
  height: 100%;
  margin-left: 22px;
  background: #a8a8a8;
`

const ZoomSign = styled.span`
  width: 16px;
  margin-left: ${p => p.$ml}px;
  font-family: 'Liberation Sans', sans-serif;
  font-size: 30px;
  font-weight: 700;
  line-height: 30px;
  text-align: center;
  color: #666;
`

const ZoomTrack = styled.div`
  position: relative;
  width: 199px;
  height: 9px;
  margin-left: 14px;
  border-radius: 5px;
  background: #9a9a9a;
`

const ZoomThumb = styled.div`
  position: absolute;
  left: 84px;
  top: -12px;
  width: 32px;
  height: 32px;
  border-radius: 50%;
  background: #fff;
  box-shadow: 0 1px 2px rgba(0, 0, 0, 0.3);
`
